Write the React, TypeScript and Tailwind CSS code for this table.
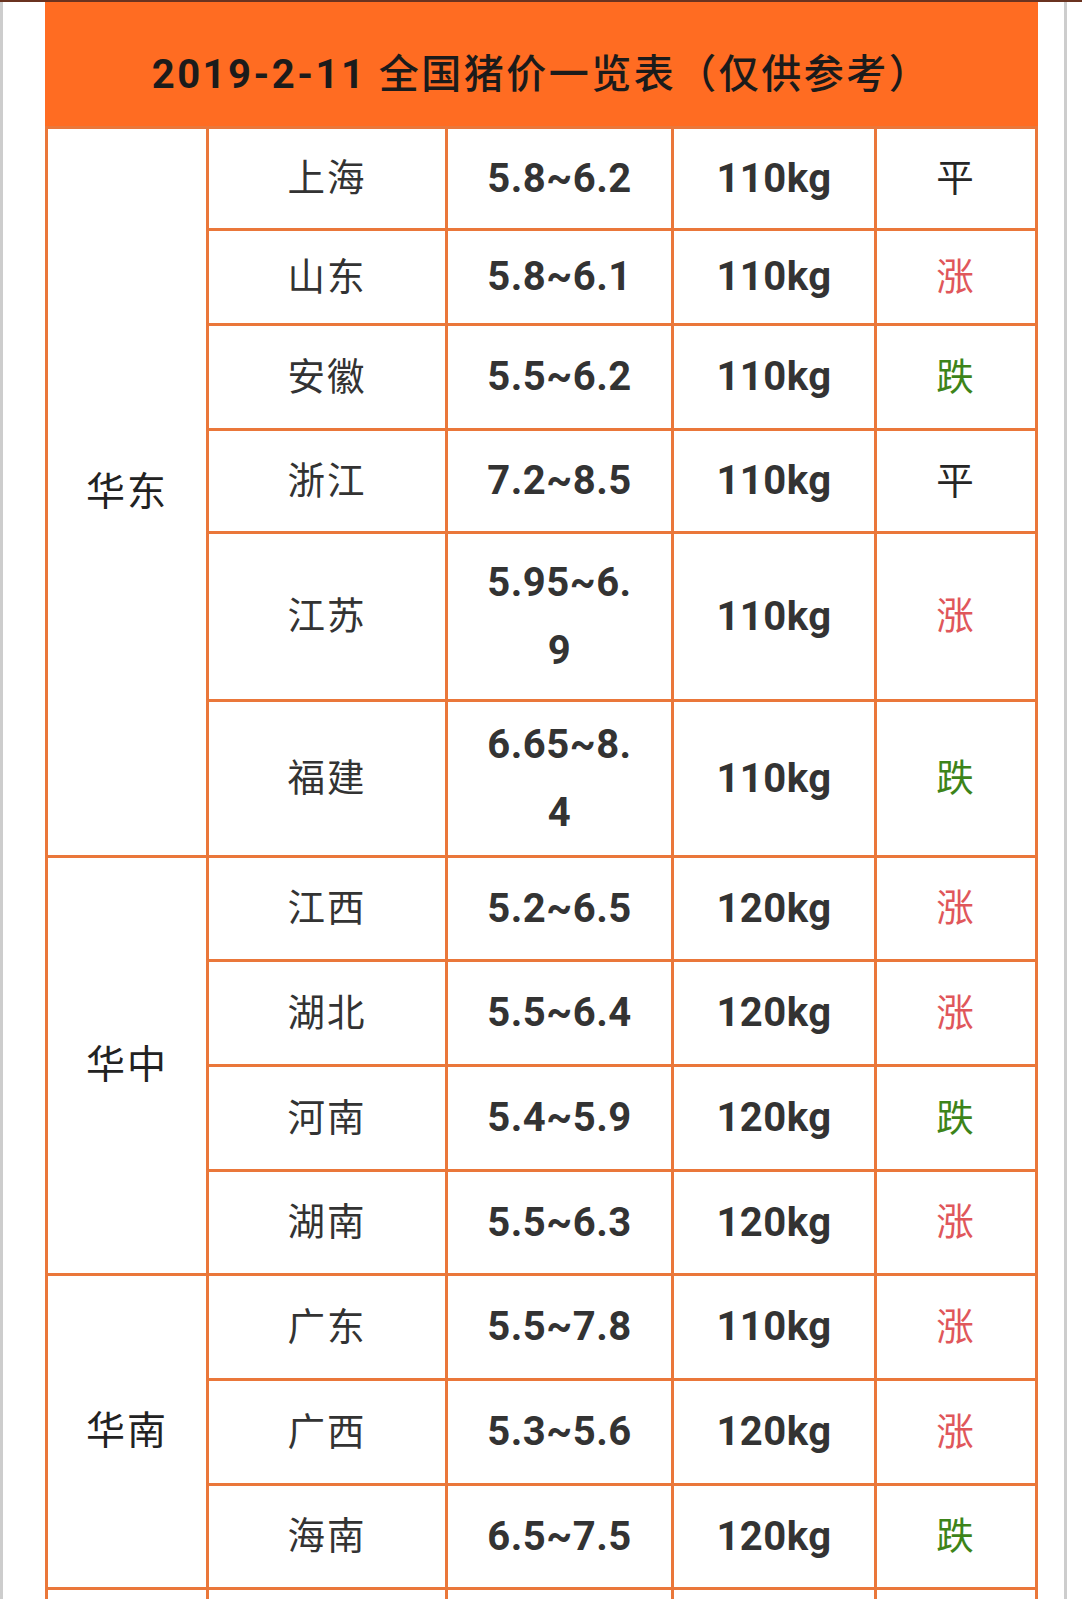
import * as React from "react"

type Row = { city: string; price: string[]; weight: string; trend: "平" | "涨" | "跌" }
type Group = { region: string; rows: Row[] }

const groups: Group[] = [
  {
    region: "华东",
    rows: [
      { city: "上海", price: ["5.8~6.2"], weight: "110kg", trend: "平" },
      { city: "山东", price: ["5.8~6.1"], weight: "110kg", trend: "涨" },
      { city: "安徽", price: ["5.5~6.2"], weight: "110kg", trend: "跌" },
      { city: "浙江", price: ["7.2~8.5"], weight: "110kg", trend: "平" },
      { city: "江苏", price: ["5.95~6.", "9"], weight: "110kg", trend: "涨" },
      { city: "福建", price: ["6.65~8.", "4"], weight: "110kg", trend: "跌" },
    ],
  },
  {
    region: "华中",
    rows: [
      { city: "江西", price: ["5.2~6.5"], weight: "120kg", trend: "涨" },
      { city: "湖北", price: ["5.5~6.4"], weight: "120kg", trend: "涨" },
      { city: "河南", price: ["5.4~5.9"], weight: "120kg", trend: "跌" },
      { city: "湖南", price: ["5.5~6.3"], weight: "120kg", trend: "涨" },
    ],
  },
  {
    region: "华南",
    rows: [
      { city: "广东", price: ["5.5~7.8"], weight: "110kg", trend: "涨" },
      { city: "广西", price: ["5.3~5.6"], weight: "120kg", trend: "涨" },
      { city: "海南", price: ["6.5~7.5"], weight: "120kg", trend: "跌" },
    ],
  },
]

const spans: Record<number, string> = {
  3: "row-span-3",
  4: "row-span-4",
  6: "row-span-6",
}

const trendColor = {
  平: "text-[#262626]",
  涨: "text-[#e0575b]",
  跌: "text-[#3d8419]",
}

function Cell({ className, children }: { className?: string; children?: React.ReactNode }) {
  return (
    <div className={"flex items-center justify-center bg-white text-center " + (className ?? "")}>
      {children}
    </div>
  )
}

export default function App() {
  return (
    <div className="relative h-[1599px] overflow-hidden bg-white font-['Roboto','Noto_Sans_CJK_SC',sans-serif]">
      <div className="h-[2px] w-full bg-[#6a3320]" />
      <div className="h-full w-[1067px] border-x-[3px] border-[#cdcdcd]">
        <div className="ml-[42px] w-[993px]">
          {/* header */}
          <div className="flex h-[124px] items-center justify-center bg-[#ff6c22] pt-[22px] text-[40px] tracking-[2.5px] text-[#1b1b1b]">
            <span className="font-bold">2019-2-11</span>
            <span className="font-medium">&nbsp;全国猪价一览表（仅供参考）</span>
          </div>

          {/* table */}
          <div className="grid grid-cols-[158px_236px_223px_200px_158px] grid-rows-[99px_92px_102px_100px_165px_153px_101px_102px_102px_101px_102px_102px_101px_101px] gap-[3px] bg-[#ea773a] p-[3px] text-[37.5px] tracking-[2px] text-[#333]">
            {groups.map((g) => (
              <React.Fragment key={g.region}>
                <Cell className={spans[g.rows.length] + " text-[39px] text-[#222]"}>{g.region}</Cell>
                {g.rows.map((r) => (
                  <React.Fragment key={r.city}>
                    <Cell>{r.city}</Cell>
                    <Cell className="text-[40px] font-bold leading-[68px] tracking-[0.5px]">
                      <div>
                        {r.price.map((p) => (
                          <div key={p}>{p}</div>
                        ))}
                      </div>
                    </Cell>
                    <Cell className="text-[40px] font-bold tracking-[0.5px]">{r.weight}</Cell>
                    <Cell className={trendColor[r.trend]}>{r.trend}</Cell>
                  </React.Fragment>
                ))}
              </React.Fragment>
            ))}
            {/* next group, mostly below the fold */}
            <Cell />
            <Cell />
            <Cell />
            <Cell />
            <Cell />
          </div>
        </div>
      </div>
    </div>
  )
}
